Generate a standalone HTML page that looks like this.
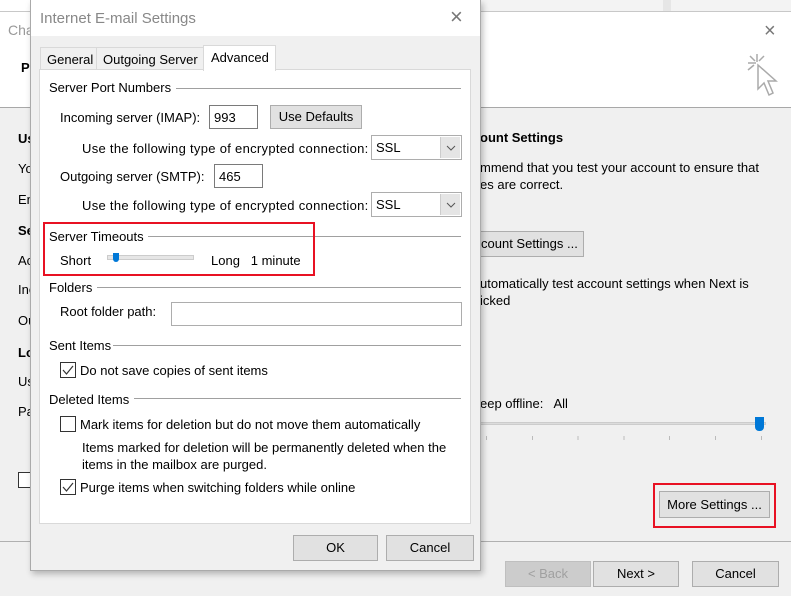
<!DOCTYPE html>
<html><head><meta charset="utf-8"><style>
*{box-sizing:border-box;margin:0;padding:0}
body{width:791px;height:596px;overflow:hidden;background:#f0f0f0;font-family:"Liberation Sans",sans-serif;font-size:13px;color:#000;position:relative}
.a{position:absolute;white-space:nowrap}
.btn{position:absolute;background:#e1e1e1;border:1px solid #adadad;text-align:center;font-size:13px}
.inp{position:absolute;background:#fff;border:1px solid #7a7a7a}
.sel{position:absolute;background:#fff;border:1px solid #adadad}
.sel .ar{position:absolute;right:1px;top:1px;bottom:1px;width:20px;background:#e5e5e5;border-left:1px solid #ccc}
.grp{position:absolute;height:1px;background:#a0a0a0}
.cb{position:absolute;width:14px;height:14px;border:1px solid #333;background:#fff}
</style></head><body>
<div class="a" style="left:0;top:0;width:791px;height:12px;background:#f3f3f3"></div>
<div class="a" style="left:0;top:0;width:30px;height:36px;background:#fff"></div>
<div class="a" style="left:663px;top:0;width:8px;height:12px;background:#e6e6e6"></div>
<div class="a" style="left:0;top:11px;width:791px;height:1px;background:#c8c8c8"></div>
<div class="a" style="left:0;top:12px;width:791px;height:95px;background:#fff"></div>
<div class="a" style="left:0;top:107px;width:791px;height:1px;background:#a8a8a8"></div>
<div class="a" style="left:8px;top:22px;font-size:14px;color:#999">Cha</div>
<div class="a" style="left:21px;top:60px;font-weight:bold">P</div>
<div class="a" style="left:764px;top:21px;font-size:20px;color:#777;line-height:20px">×</div>
<svg class="a" style="left:744px;top:52px" width="36" height="52" viewBox="0 0 36 52"><g stroke="#aaa" stroke-width="1.5" fill="none"><path d="M13 2v8M4 11h8M6 4l5 5M20 4l-5 5M4 18l6-5"/><path d="M14 13v24l6-6 5 12 4-2-5-12h8z" fill="#fff"/></g></svg>
<div class="a" style="left:18px;top:131px;font-weight:bold;font-size:13px">Us</div>
<div class="a" style="left:18px;top:161px">Yo</div>
<div class="a" style="left:18px;top:192px">En</div>
<div class="a" style="left:18px;top:223px;font-weight:bold;font-size:13px">Se</div>
<div class="a" style="left:18px;top:253px">Ac</div>
<div class="a" style="left:18px;top:282px">Inc</div>
<div class="a" style="left:18px;top:313px">Ou</div>
<div class="a" style="left:18px;top:345px;font-weight:bold;font-size:13px">Lo</div>
<div class="a" style="left:18px;top:374px">Us</div>
<div class="a" style="left:18px;top:404px">Pa</div>
<div class="cb" style="left:18px;top:472px;width:15px;height:16px"></div>
<div class="a" style="left:480px;top:130px;font-weight:bold;font-size:13px">ount Settings</div>
<div class="a" style="left:480px;top:160px;font-size:13px">mmend that you test your account to ensure that</div>
<div class="a" style="left:480px;top:177px;font-size:13px">es are correct.</div>
<div class="btn" style="left:470px;top:231px;width:114px;height:26px;line-height:24px;text-align:left;padding-left:10px">count Settings ...</div>
<div class="a" style="left:480px;top:276px;font-size:13px">utomatically test account settings when Next is</div>
<div class="a" style="left:480px;top:293px;font-size:13px">icked</div>
<div class="a" style="left:480px;top:396px;font-size:13px">eep offline:&nbsp;&nbsp; All</div>
<div class="a" style="left:480px;top:422px;width:286px;height:3px;background:#dcdcdc;border:1px solid #ccc"></div>
<div class="a" style="left:755px;top:417px;width:9px;height:14px;background:#0078d7;border-radius:0 0 4px 4px"></div>
<div class="a" style="left:486px;top:436px;width:280px;height:4px;background:repeating-linear-gradient(90deg,#bbb 0 1px,transparent 1px 45.8px)"></div>
<div class="a" style="left:653px;top:483px;width:123px;height:45px;border:2px solid #e81123"></div>
<div class="btn" style="left:659px;top:491px;width:111px;height:27px;line-height:25px">More Settings ...</div>
<div class="a" style="left:0;top:541px;width:791px;height:1px;background:#b0b0b0"></div>
<div class="btn" style="left:505px;top:561px;width:86px;height:26px;line-height:24px;color:#a0a0a0;background:#ccc;border-color:#bfbfbf">&lt; Back</div>
<div class="btn" style="left:593px;top:561px;width:86px;height:26px;line-height:24px">Next &gt;</div>
<div class="btn" style="left:692px;top:561px;width:87px;height:26px;line-height:24px">Cancel</div>

<div class="a" style="left:30px;top:0;width:451px;height:571px;background:#f0f0f0;border:1px solid #aaa;box-shadow:2px 3px 6px rgba(0,0,0,.25)"></div>
<div class="a" style="left:31px;top:0;width:449px;height:36px;background:#fff"></div>
<div class="a" style="left:40px;top:10px;font-size:15px;color:#888">Internet E-mail Settings</div>
<div class="a" style="left:450px;top:6px;font-size:22px;color:#777;line-height:22px">×</div>
<div class="a" style="left:40px;top:47px;width:57px;height:23px;border:1px solid #d9d9d9;background:#f0f0f0;padding:4px 0 0 6px">General</div>
<div class="a" style="left:96px;top:47px;width:108px;height:23px;border:1px solid #d9d9d9;background:#f0f0f0;padding:4px 0 0 6px">Outgoing Server</div>
<div class="a" style="left:39px;top:69px;width:432px;height:455px;background:#fff;border:1px solid #d9d9d9"></div>
<div class="a" style="left:203px;top:45px;width:73px;height:26px;border:1px solid #d9d9d9;border-bottom:none;background:#fff;padding:4px 0 0 7px">Advanced</div>

<div class="a" style="left:49px;top:80px">Server Port Numbers</div>
<div class="grp" style="left:176px;top:88px;width:285px"></div>
<div class="a" style="left:60px;top:110px">Incoming server (IMAP):</div>
<div class="inp" style="left:209px;top:105px;width:49px;height:24px;padding:4px 0 0 4px">993</div>
<div class="btn" style="left:270px;top:105px;width:92px;height:24px;line-height:22px">Use Defaults</div>
<div class="a" style="left:82px;top:141px;letter-spacing:0.3px">Use the following type of encrypted connection:</div>
<div class="sel" style="left:371px;top:135px;width:91px;height:25px;padding:4px 0 0 4px">SSL<div class="ar"><svg width="20" height="21"><path d="M6 9l4 4 4-4" stroke="#555" fill="none"/></svg></div></div>
<div class="a" style="left:60px;top:169px">Outgoing server (SMTP):</div>
<div class="inp" style="left:214px;top:164px;width:49px;height:24px;padding:4px 0 0 4px">465</div>
<div class="a" style="left:82px;top:198px;letter-spacing:0.3px">Use the following type of encrypted connection:</div>
<div class="sel" style="left:371px;top:192px;width:91px;height:25px;padding:4px 0 0 4px">SSL<div class="ar"><svg width="20" height="21"><path d="M6 9l4 4 4-4" stroke="#555" fill="none"/></svg></div></div>

<div class="a" style="left:49px;top:229px">Server Timeouts</div>
<div class="grp" style="left:148px;top:236px;width:313px"></div>
<div class="a" style="left:60px;top:253px">Short</div>
<div class="a" style="left:107px;top:255px;width:87px;height:5px;background:#e6e6e6;border:1px solid #ccc"></div>
<div class="a" style="left:113px;top:253px;width:6px;height:9px;background:#0078d7;border-radius:0 0 3px 3px"></div>
<div class="a" style="left:211px;top:253px">Long&nbsp;&nbsp;&nbsp;1 minute</div>
<div class="a" style="left:43px;top:222px;width:272px;height:54px;border:2px solid #e81123"></div>

<div class="a" style="left:49px;top:280px">Folders</div>
<div class="grp" style="left:97px;top:287px;width:364px"></div>
<div class="a" style="left:60px;top:304px">Root folder path:</div>
<div class="inp" style="left:171px;top:302px;width:291px;height:24px;border-color:#adadad"></div>

<div class="a" style="left:49px;top:338px">Sent Items</div>
<div class="grp" style="left:113px;top:345px;width:348px"></div>
<div class="cb" style="left:60px;top:362px;width:16px;height:16px"><svg width="14" height="14" style="position:absolute;left:0;top:0"><path d="M2 7l3.5 4L12 3" stroke="#333" stroke-width="1.2" fill="none"/></svg></div>
<div class="a" style="left:80px;top:363px">Do not save copies of sent items</div>

<div class="a" style="left:49px;top:392px">Deleted Items</div>
<div class="grp" style="left:134px;top:398px;width:327px"></div>
<div class="cb" style="left:60px;top:416px;width:16px;height:16px"></div>
<div class="a" style="left:80px;top:417px">Mark items for deletion but do not move them automatically</div>
<div class="a" style="left:82px;top:440px">Items marked for deletion will be permanently deleted when the</div>
<div class="a" style="left:82px;top:457px">items in the mailbox are purged.</div>
<div class="cb" style="left:60px;top:479px;width:16px;height:16px"><svg width="14" height="14" style="position:absolute;left:0;top:0"><path d="M2 7l3.5 4L12 3" stroke="#333" stroke-width="1.2" fill="none"/></svg></div>
<div class="a" style="left:80px;top:480px">Purge items when switching folders while online</div>

<div class="btn" style="left:293px;top:535px;width:85px;height:26px;line-height:24px">OK</div>
<div class="btn" style="left:386px;top:535px;width:88px;height:26px;line-height:24px">Cancel</div>
</body></html>
